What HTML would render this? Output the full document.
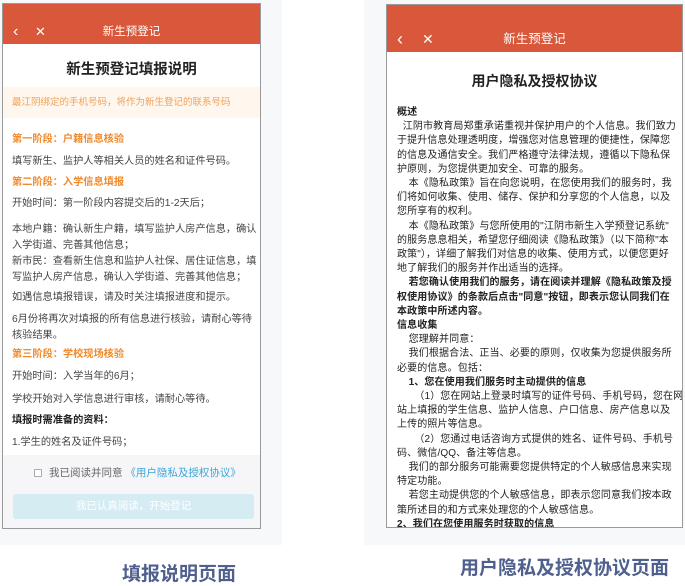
<!DOCTYPE html><html><head><meta charset="utf-8"><style>
*{margin:0;padding:0;box-sizing:border-box}
body{width:685px;height:582px;background:#fff;position:relative;overflow:hidden;font-family:"Liberation Sans","Noto Sans CJK SC",sans-serif;}
.a{position:absolute}
.ph{position:absolute;border:1px solid #9a9a9a;background:#fff;overflow:hidden}
.hd{background:#d9573a;color:#fff;position:absolute;left:0;right:0;top:0}
.t{position:absolute;white-space:nowrap;font-size:10.2px;line-height:14px;color:#444}
.o{color:#f08a2c;font-weight:bold}
.r{position:absolute;left:10px;top:101px;font-size:10px;letter-spacing:.12px;line-height:14.2px;color:#222;white-space:nowrap}
.cap{position:absolute;font-weight:bold;color:#4f5f8e;font-size:19px;white-space:nowrap}
</style></head><body>
<div class="a" style="left:0;top:0;width:282px;height:545px;background:#f7f8fa"></div>
<div class="a" style="left:364px;top:0;width:321px;height:545px;background:#f7f8fa"></div>

<div class="ph" style="left:2px;top:3px;width:259px;height:526px">
 <div class="hd" style="height:40px">
  <span class="a" style="left:10px;top:18px;font-size:16px;line-height:20px">&#8249;</span>
  <span class="a" style="left:32px;top:20px;font-size:13px;line-height:16px">✕</span>
  <span class="a" style="left:0;right:0;top:21px;text-align:center;font-size:11.5px;line-height:14px">新生预登记</span>
 </div>
 <div class="a" style="left:0;right:0;top:54px;text-align:center;font-size:14.5px;font-weight:bold;color:#222">新生预登记填报说明</div>
 <div class="a" style="left:0;right:0;top:83px;height:31px;background:#fff7ee"></div>
 <div class="t" style="left:9px;top:92px;font-size:9.5px;color:#f0a25a">最江阴绑定的手机号码，将作为新生登记的联系号码</div>
 <div class="t o" style="left:9px;top:129px">第一阶段：户籍信息核验</div>
 <div class="t" style="left:9px;top:151px">填写新生、监护人等相关人员的姓名和证件号码。</div>
 <div class="t o" style="left:9px;top:172px">第二阶段：入学信息填报</div>
 <div class="t" style="left:9px;top:193px">开始时间：第一阶段内容提交后的1-2天后；</div>
 <div class="t" style="left:9px;top:218px;line-height:16px">本地户籍：确认新生户籍，填写监护人房产信息，确认<br>入学街道、完善其他信息；</div>
 <div class="t" style="left:9px;top:250px;line-height:16px">新市民：查看新生信息和监护人社保、居住证信息，填<br>写监护人房产信息，确认入学街道、完善其他信息；</div>
 <div class="t" style="left:9px;top:287px">如遇信息填报错误，请及时关注填报进度和提示。</div>
 <div class="t" style="left:9px;top:308px;line-height:16px">6月份将再次对填报的所有信息进行核验，请耐心等待<br>核验结果。</div>
 <div class="t o" style="left:9px;top:344px">第三阶段：学校现场核验</div>
 <div class="t" style="left:9px;top:366px">开始时间：入学当年的6月；</div>
 <div class="t" style="left:9px;top:389px">学校开始对入学信息进行审核，请耐心等待。</div>
 <div class="t" style="left:9px;top:410px;font-weight:bold;color:#222">填报时需准备的资料：</div>
 <div class="t" style="left:9px;top:432px">1.学生的姓名及证件号码；</div>
 <div class="a" style="left:0;right:0;top:451px;bottom:0;background:#f6f6f8"></div>
 <div class="a" style="left:31px;top:465px;width:8px;height:8px;border:1px solid #aaa;background:#fff;border-radius:1px"></div>
 <div class="t" style="left:46px;top:462px;font-size:10.5px;color:#666">我已阅读并同意 <span style="color:#3aa6d8">《用户隐私及授权协议》</span></div>
 <div class="a" style="left:10px;top:490px;width:241px;height:25px;background:#d5ecf3;border-radius:3px;color:#fff;font-size:10.5px;text-align:center;line-height:25px">我已认真阅读，开始登记</div>
</div>

<div class="ph" style="left:386px;top:4px;width:297px;height:524px">
 <div class="hd" style="height:47px">
  <span class="a" style="left:10px;top:24px;font-size:18px;line-height:20px">&#8249;</span>
  <span class="a" style="left:35px;top:26px;font-size:14px;line-height:16px">✕</span>
  <span class="a" style="left:0;right:0;top:26px;text-align:center;font-size:12.5px;line-height:16px">新生预登记</span>
 </div>
 <div class="a" style="left:0;right:0;top:66px;text-align:center;font-size:14px;font-weight:bold;color:#222">用户隐私及授权协议</div>
 <div class="r"><b>概述</b><br>
&nbsp;&nbsp;江阴市教育局郑重承诺重视并保护用户的个人信息。我们致力<br>
于提升信息处理透明度，增强您对信息管理的便捷性，保障您<br>
的信息及通信安全。我们严格遵守法律法规，遵循以下隐私保<br>
护原则，为您提供更加安全、可靠的服务。<br>
&nbsp;&nbsp;&nbsp;&nbsp;本《隐私政策》旨在向您说明，在您使用我们的服务时，我<br>
们将如何收集、使用、储存、保护和分享您的个人信息，以及<br>
您所享有的权利。<br>
&nbsp;&nbsp;&nbsp;&nbsp;本《隐私政策》与您所使用的"江阴市新生入学预登记系统"<br>
的服务息息相关，希望您仔细阅读《隐私政策》（以下简称"本<br>
政策"），详细了解我们对信息的收集、使用方式，以便您更好<br>
地了解我们的服务并作出适当的选择。<br>
<b>&nbsp;&nbsp;&nbsp;&nbsp;若您确认使用我们的服务，请在阅读并理解《隐私政策及授<br>
权使用协议》的条款后点击"同意"按钮，即表示您认同我们在<br>
本政策中所述内容。</b><br>
<b>信息收集</b><br>
&nbsp;&nbsp;&nbsp;&nbsp;您理解并同意：<br>
&nbsp;&nbsp;&nbsp;&nbsp;我们根据合法、正当、必要的原则，仅收集为您提供服务所<br>
必要的信息。包括：<br>
<b>&nbsp;&nbsp;&nbsp;&nbsp;1、您在使用我们服务时主动提供的信息</b><br>
&nbsp;&nbsp;&nbsp;&nbsp;&nbsp;&nbsp;（1）您在网站上登录时填写的证件号码、手机号码，您在网<br>
站上填报的学生信息、监护人信息、户口信息、房产信息以及<br>
上传的照片等信息。<br>
&nbsp;&nbsp;&nbsp;&nbsp;&nbsp;&nbsp;（2）您通过电话咨询方式提供的姓名、证件号码、手机号<br>
码、微信/QQ、备注等信息。<br>
&nbsp;&nbsp;&nbsp;&nbsp;我们的部分服务可能需要您提供特定的个人敏感信息来实现<br>
特定功能。<br>
&nbsp;&nbsp;&nbsp;&nbsp;若您主动提供您的个人敏感信息，即表示您同意我们按本政<br>
策所述目的和方式来处理您的个人敏感信息。<br>
<b>2、我们在您使用服务时获取的信息</b></div>
</div>

<div class="cap" style="left:122px;top:559px">填报说明页面</div>
<div class="cap" style="left:460px;top:553px">用户隐私及授权协议页面</div>
</body></html>
